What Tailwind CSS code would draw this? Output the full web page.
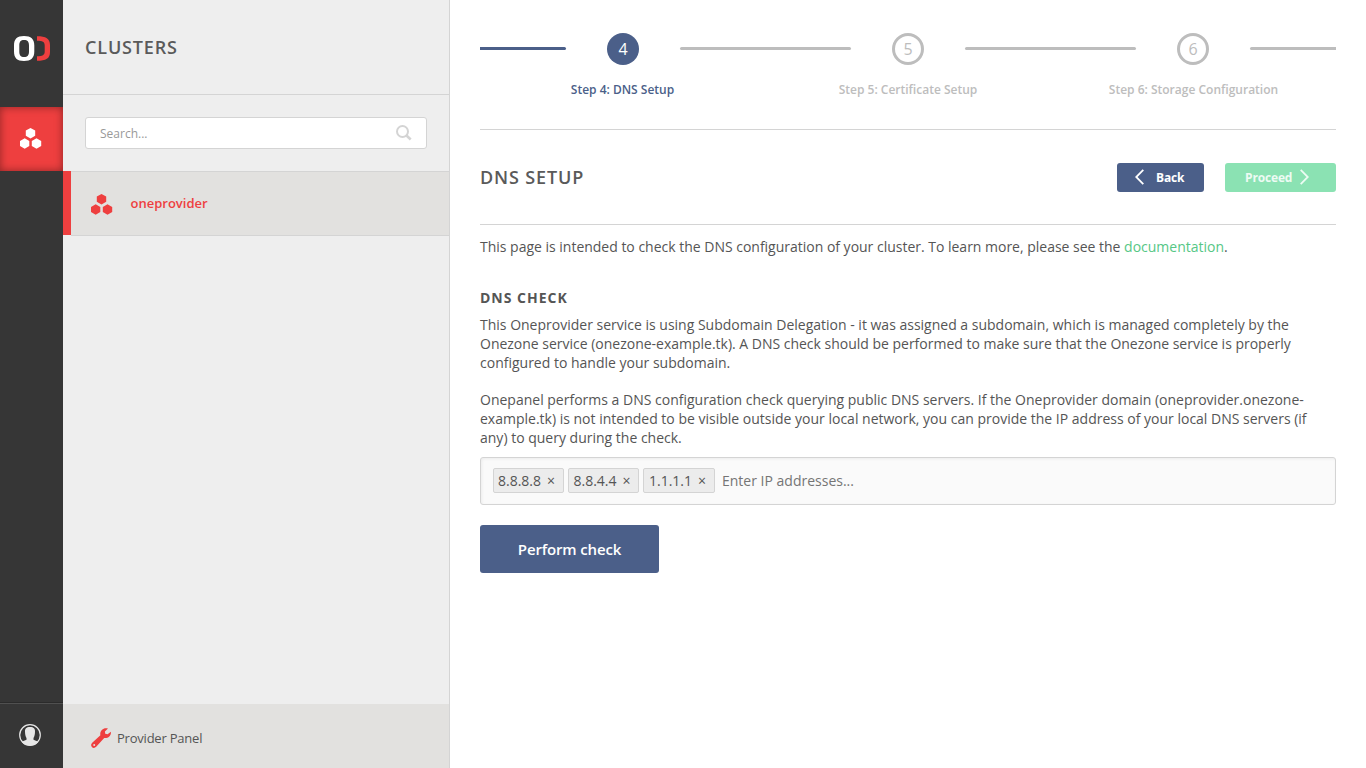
<!DOCTYPE html>
<html lang="en">
<head>
<meta charset="utf-8">
<title>Onepanel - DNS setup</title>
<script src="https://cdn.jsdelivr.net/npm/@tailwindcss/browser@4"></script>
</head>
<body class="flex h-screen w-screen overflow-hidden bg-white font-['Open_Sans',sans-serif] text-sm leading-[19px] text-[#555]">
<svg class="hidden">
  <symbol id="cluster" viewBox="0 0 22 21">
    <path d="M10.500 0l4.700 2.600v5.200l-4.700 2.600-4.700-2.600V2.600zM4.700 10.300l4.600 2.600v5.200l-4.600 2.600L0 18.100v-5.200zM16.500 10.300l4.700 2.600v5.200l-4.700 2.600-4.700-2.600v-5.200z" fill="currentColor"/>
  </symbol>
</svg>

<nav class="flex w-[63px] shrink-0 flex-col bg-[#363636]">
  <div class="flex h-[107px] items-start pt-9 pl-[14px]">
    <svg class="h-[25px] w-[36px]" viewBox="0 0 36 25">
      <path fill="#fff" fill-rule="evenodd" d="M10 0C17 0 20.300 3 20.300 9.500v6C20.300 22 17 25 10 25S0 22 0 15.500v-6C0 3 3 0 10 0zM10.100 4C6.600 4 5.300 5.800 5.300 9.500v6c0 3.700 1.300 5.500 4.800 5.500s4.900-1.800 4.900-5.500v-6C15 5.800 13.600 4 10.100 4z"/>
      <path fill="#ee3f3f" d="M23 .2C32 .2 36 2.500 36 9v7c0 6.500-4 8.800-13 8.800v-4.600c5.500 0 7.700-1 7.700-4.700v-6c0-3.700-2.200-4.700-7.700-4.700z"/>
    </svg>
  </div>
  <div class="flex h-16 items-center justify-center bg-[#ee3f3f] pr-[2px] pb-[2px] text-white shadow-[inset_0_0_9px_rgba(0,0,0,0.4)]">
    <svg class="h-[21px] w-[22px]"><use href="#cluster"/></svg>
  </div>
  <div class="mt-auto h-[66px] border-t border-[#2b2b2b]">
    <div class="flex h-full items-start border-t border-[#505050] pt-5 pl-[19px]">
      <svg class="h-[22px] w-[22px]" viewBox="0 0 22 22">
        <circle cx="11" cy="11" r="10.300" fill="none" stroke="#e6e6e6" stroke-width="1.200"/>
        <path fill="#e6e6e6" d="M11 3c3.800 0 5.300 1.800 5 4.800-.1 2.700-.5 4.900-1.500 6.100v1.800c1.500.9 3.400 1.200 4.800 2.300A10.300 10.300 0 0 1 11 21.500 10.300 10.300 0 0 1 2.700 18c1.400-1.100 3.300-1.400 4.800-2.300v-1.800C6.500 12.700 6.100 10.500 6 7.800 5.700 4.800 7.200 3 11 3z"/>
      </svg>
    </div>
  </div>
</nav>

<aside class="flex w-[387px] shrink-0 flex-col border-r border-[#d4d4d4] bg-[#eee]">
  <header class="flex h-[95px] items-center border-b border-[#d4d4d4] pl-[22px]">
    <h1 class="text-[18px] font-semibold tracking-[0.850px] text-[#5a5a5a]">CLUSTERS</h1>
  </header>
  <div class="h-[76px] px-[22px] pt-[22px]">
    <div class="flex h-8 items-center justify-between rounded-[3px] border border-[#d4d4d4] bg-white pr-[14px] pl-[14px]">
      <span class="pt-[2px] text-xs text-[#999]">Search...</span>
      <svg class="h-4 w-4" viewBox="0 0 16 16" fill="none" stroke="#d4d4d4" stroke-width="2"><circle cx="6.500" cy="6.500" r="5.500"/><path d="M10.500 10.500L14.700 14.500" stroke-width="2.600"/></svg>
    </div>
  </div>
  <div class="flex h-[65px] text-[#ee3f3f]">
    <div class="h-16 w-2 bg-[#ee3f3f]"></div>
    <div class="flex grow items-center border-y border-[#d4d4d4] bg-[#e2e1df] pl-5">
      <svg class="mt-px h-[21px] w-[22px]"><use href="#cluster"/></svg>
      <span class="ml-[17.500px] text-[13px] font-semibold">oneprovider</span>
    </div>
  </div>
  <footer class="mt-auto flex h-16 items-center bg-[#e2e1df] pt-1 pl-7">
    <svg class="mb-px h-5 w-5" viewBox="0 0 20 20">
      <path fill="#ee3f3f" fill-rule="evenodd" d="M17 .6L13.900 3.500l.3 2.300 2.400.4 3.300-2.500c.5 4-2.800 6.900-6.700 6.300L5.200 18.800c-1.400 1.400-3.200 1.400-4.300.2S-.2 16.100 1.200 14.700L9.400 7.300C8.400 2.700 12.600-1 17 .6zM3.200 15.900a1 1 0 1 0 0 2 1 1 0 0 0 0-2z"/>
    </svg>
    <span class="ml-[6px] text-[13px] tracking-[-0.220px]">Provider Panel</span>
  </footer>
</aside>

<main class="flex min-w-0 grow flex-col px-[30px]">
  <section class="grid h-[130px] shrink-0 grid-cols-[285px_285px_286px] border-b border-[#d4d4d4] pt-[33px] text-xs font-semibold text-[#bdbdbd]">
    <div class="flex flex-col items-center text-[#4b5f89]">
      <div class="flex h-8 w-full items-center justify-between">
        <div class="mb-px h-[3px] w-[86px] rounded-r-sm bg-[#4b5f89]"></div>
        <div class="flex h-8 w-8 items-center justify-center rounded-full bg-[#4b5f89] text-base font-normal text-white">4</div>
        <div class="mb-px h-[3px] w-[85px] rounded-l-sm bg-[#bdbdbd]"></div>
      </div>
      <div class="mt-[17px]">Step 4: DNS Setup</div>
    </div>
    <div class="flex flex-col items-center">
      <div class="flex h-8 w-full items-center justify-between">
        <div class="mb-px h-[3px] w-[86px] rounded-r-sm bg-[#bdbdbd]"></div>
        <div class="flex h-8 w-8 items-center justify-center rounded-full border-3 border-[#bdbdbd] text-base font-normal">5</div>
        <div class="mb-px h-[3px] w-[85px] rounded-l-sm bg-[#bdbdbd]"></div>
      </div>
      <div class="mt-[17px] pl-px">Step 5: Certificate Setup</div>
    </div>
    <div class="flex flex-col items-center">
      <div class="flex h-8 w-full items-center justify-between">
        <div class="mb-px h-[3px] w-[86px] rounded-r-sm bg-[#bdbdbd]"></div>
        <div class="flex h-8 w-8 items-center justify-center rounded-full border-3 border-[#bdbdbd] text-base font-normal">6</div>
        <div class="mb-px h-[3px] w-[86px] rounded-l-sm bg-[#bdbdbd]"></div>
      </div>
      <div class="mt-[17px] pl-px">Step 6: Storage Configuration</div>
    </div>
  </section>

  <header class="flex h-[95px] shrink-0 items-center justify-between border-b border-[#d4d4d4]">
    <h2 class="text-[18px] font-semibold tracking-[0.850px] text-[#5a5a5a]">DNS SETUP</h2>
    <div class="flex gap-[21px] text-xs font-bold text-white">
      <button class="flex h-[29px] w-[87px] items-center rounded-[3px] bg-[#4b5f89] pl-[18px]">
        <svg class="mb-px h-4 w-[9px]" viewBox="0 0 9 16" fill="none" stroke="currentColor" stroke-width="1.800"><path d="M8.300.8L1.200 8l7.100 7.200"/></svg>
        <span class="ml-3 pt-px tracking-[-0.150px]">Back</span>
      </button>
      <button class="flex h-[29px] w-[111px] items-center rounded-[3px] bg-[#8be2b3] pl-5 text-[#edfbf3]">
        <span class="pt-px tracking-[-0.150px]">Proceed</span>
        <svg class="mb-px ml-2 h-4 w-[9px]" viewBox="0 0 9 16" fill="none" stroke="currentColor" stroke-width="1.800"><path d="M.7.8L7.800 8 .7 15.200"/></svg>
      </button>
    </div>
  </header>

  <p class="mt-3 whitespace-nowrap tracking-[-0.010px]">This page is intended to check the DNS configuration of your cluster. To learn more, please see the <a class="text-[#56c786]">documentation</a>.</p>

  <h3 class="mt-8 font-bold tracking-[1px]">DNS CHECK</h3>
  <p class="mt-2 whitespace-nowrap">This Oneprovider service is using Subdomain Delegation - it was assigned a subdomain, which is managed completely by the<br><span class="tracking-[-0.010px]">Onezone service (onezone-example.tk). A DNS check should be performed to make sure that the Onezone service is properly</span><br>configured to handle your subdomain.</p>
  <p class="mt-[18px] whitespace-nowrap">Onepanel performs a DNS configuration check querying public DNS servers. If the Oneprovider domain (oneprovider.onezone-<br>example.tk) is not intended to be visible outside your local network, you can provide the IP address of your local DNS servers (if<br>any) to query during the check.</p>

  <div class="mt-[10px] flex h-12 shrink-0 items-center gap-1 rounded-[3px] border border-[#d4d4d4] bg-[#fafafa] pb-[2px] pl-3 shadow-[inset_1px_1px_3px_rgba(0,0,0,0.06)]">
    <div class="flex h-[25px] w-[71px] items-center rounded-[2px] border border-[#d4d4d4] bg-[#ececec] pl-1">8.8.8.8<span class="ml-[6px]">×</span></div>
    <div class="flex h-[25px] w-[71px] items-center rounded-[2px] border border-[#d4d4d4] bg-[#ececec] pl-[4.500px]">8.8.4.4<span class="ml-[6px]">×</span></div>
    <div class="flex h-[25px] w-[72px] items-center rounded-[2px] border border-[#d4d4d4] bg-[#ececec] pl-[5px]">1.1.1.1<span class="ml-[6px]">×</span></div>
    <span class="ml-[3px] text-[#757575]">Enter IP addresses...</span>
  </div>

  <button class="mt-5 flex h-12 w-[179px] shrink-0 items-center justify-center rounded-[3px] bg-[#4b5f89] pt-px text-[15px] font-semibold tracking-[-0.150px] text-white">Perform check</button>
</main>
</body>
</html>
